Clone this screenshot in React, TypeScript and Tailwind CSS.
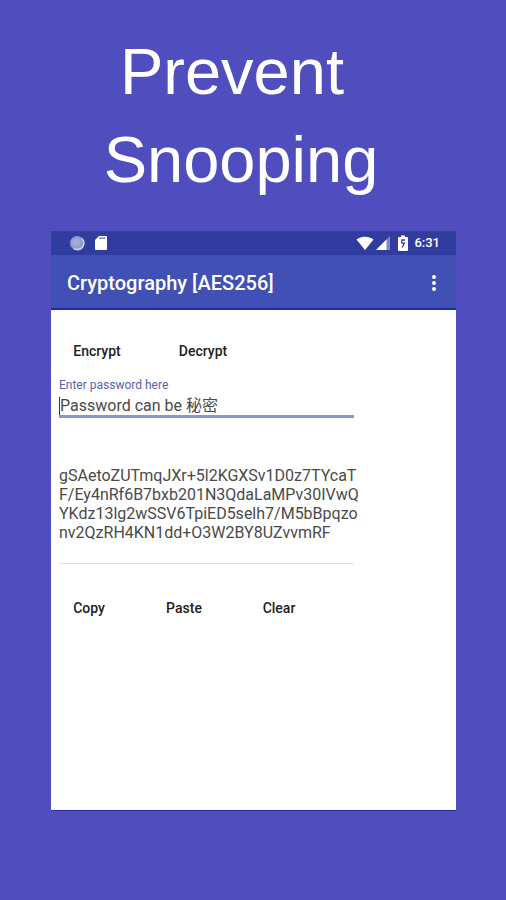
import { useState } from 'react';

const cipherText = [
    'gSAetoZUTmqJXr+5l2KGXSv1D0z7TYcaT',
    'F/Ey4nRf6B7bxb201N3QdaLaMPv30IVwQ',
    'YKdz13lg2wSSV6TpiED5selh7/M5bBpqzo',
    'nv2QzRH4KN1dd+O3W2BY8UZvvmRF',
].join('\n');

const StatusBar = () => (
    <div className="flex h-6 items-center justify-between bg-[#303d9f] pl-[18px] pr-4 text-white">
        <div className="flex items-center gap-2.5">
            <svg className="size-4" viewBox="0 0 16 16" aria-hidden="true">
                <circle cx="8" cy="8" r="7" fill="#8f9ad0" />
                <path
                    d="M13 3.5a6.5 6.5 0 0 1-8.5 9.8"
                    fill="none"
                    stroke="#c9cfee"
                    strokeWidth="1.6"
                />
                <circle cx="7.5" cy="7.5" r="4" fill="#a0a9d8" />
            </svg>
            <svg className="h-4 w-3" viewBox="0 0 12 16" aria-hidden="true">
                <path
                    d="M4 1h7a1 1 0 0 1 1 1v12a1 1 0 0 1-1 1H1a1 1 0 0 1-1-1V5z"
                    fill="#fff"
                />
                <path d="M4.5 3.3h5.5" stroke="#303d9f" strokeWidth="1.4" strokeDasharray="1.3 .7" />
            </svg>
        </div>
        <div className="flex items-center">
            <svg className="h-4 w-[18px]" viewBox="0 0 18 16" aria-hidden="true">
                <path d="M.5 4.5C5.5.7 12.5.7 17.5 4.5L9 15z" fill="#fff" />
            </svg>
            <svg className="ml-0.5 size-3.5" viewBox="0 0 14 14" aria-hidden="true">
                <path d="M14 0v14H0z" fill="#7f89c8" />
                <path d="M10.5 3.5V14H0z" fill="#fff" />
            </svg>
            <svg className="ml-2 h-4 w-2.5" viewBox="0 0 10 16" aria-hidden="true">
                <path
                    d="M3 .5h4V2h2a1 1 0 0 1 1 1v12a1 1 0 0 1-1 1H1a1 1 0 0 1-1-1V3a1 1 0 0 1 1-1h2z"
                    fill="#fff"
                />
                <path d="M7 5H3.8v3.2h2.6L4.2 12.5" fill="none" stroke="#303d9f" strokeWidth="1.3" />
            </svg>
            <span className="ml-1.5 text-[13px] font-medium leading-4">6:31</span>
        </div>
    </div>
);

const AppBar = () => (
    <header className="flex h-[55px] items-center justify-between border-b-2 border-[#1c2d9b] bg-[#4050b5] pl-4 pr-3 pt-0.5 text-white">
        <h2 className="text-xl font-medium">Cryptography [AES256]</h2>
        <button type="button" aria-label="More options" className="flex w-5 justify-center">
            <svg className="h-5 w-1" viewBox="0 0 4 20" fill="#fff" aria-hidden="true">
                <circle cx="2" cy="4" r="2" />
                <circle cx="2" cy="10" r="2" />
                <circle cx="2" cy="16" r="2" />
            </svg>
        </button>
    </header>
);

const App = () => {
    const [password, setPassword] = useState('Password can be 秘密');
    const [message, setMessage] = useState(cipherText);

    return (
        <main className="min-h-screen bg-[#504dbf] px-[51px] pb-[89px] pt-7 font-['Roboto','Noto_Sans_CJK_SC',sans-serif]">
            <h1 className="pr-6 text-center font-['Liberation_Sans',sans-serif] text-[65px] leading-[88px] text-white">
                Prevent&nbsp;
                <br />
                Snooping
            </h1>

            <section className="-mr-px mt-[27px] min-h-[580px] border-b border-[#2d2ba8] bg-white">
                <StatusBar />
                <AppBar />
                <div className="px-2 pt-[25px] text-[#222]">
                    <div className="flex gap-[30px] text-sm font-medium">
                        <button type="button" className="h-8 w-[76px]">Encrypt</button>
                        <button type="button" className="h-8 w-[76px]">Decrypt</button>
                    </div>

                    <div className="mr-[94px] mt-2.5">
                        <label htmlFor="password" className="block text-xs leading-4 text-[#5563ae]">
                            Enter password here
                        </label>
                        <div className="border-b-[3px] border-[#8c98cb] pt-1">
                            <input
                                id="password"
                                type="text"
                                value={password}
                                onChange={(e) => setPassword(e.target.value)}
                                className="block h-[18px] w-full border-l border-[#333] text-base leading-[18px] text-[#4a4a4a] outline-none"
                            />
                        </div>
                        <div className="mt-12 border-b border-[#e2e2e2]">
                            <textarea
                                aria-label="Message"
                                rows={5}
                                value={message}
                                onChange={(e) => setMessage(e.target.value)}
                                className="-mr-2 block h-[97px] w-[calc(100%+8px)] resize-none overflow-hidden whitespace-pre text-base leading-[19px] text-[#4a4a4a] outline-none"
                            />
                        </div>
                    </div>

                    <div className="mt-7 flex gap-[35px] text-sm font-medium">
                        <button type="button" className="h-8 w-[60px]">Copy</button>
                        <button type="button" className="h-8 w-[60px]">Paste</button>
                        <button type="button" className="h-8 w-[60px]">Clear</button>
                    </div>
                </div>
            </section>
        </main>
    );
};

export default App;
